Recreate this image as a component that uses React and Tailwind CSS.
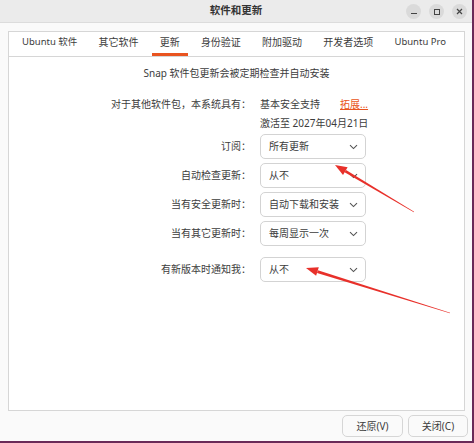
import React from 'react';

const font = { fontFamily: '"Noto Sans", "Noto Sans CJK SC", sans-serif' };

const Chevron = () => (
  <svg width="9" height="6" viewBox="0 0 9 6" className="text-[#555]">
    <path d="M1 1.2 L4.5 4.6 L8 1.2" fill="none" stroke="currentColor" strokeWidth="1.1" />
  </svg>
);

const Select = ({ value, className = '' }) => (
  <div
    className={`flex h-[25px] w-[106px] items-center justify-between rounded-[5px] border border-[#d3d3d3] bg-white pl-[8px] pr-[7px] ${className}`}
  >
    <span>{value}</span>
    <Chevron />
  </div>
);

const Row = ({ label, value, className = '' }) => (
  <div className={`flex items-center ${className}`}>
    <div className="w-[246px] pr-[4px] text-right">{label}</div>
    <div className="pl-[5px]">
      <Select value={value} />
    </div>
  </div>
);

// tapered arrow from tail to tip
const Arrow = ({ tail, tip }) => {
  const dx = tip[0] - tail[0];
  const dy = tip[1] - tail[1];
  const len = Math.hypot(dx, dy);
  const u = [dx / len, dy / len];
  const n = [-u[1], u[0]];
  const hl = 12;
  const hw = 4.5;
  const base = [tip[0] - hl * u[0], tip[1] - hl * u[1]];
  const p = (pt, k) => `${pt[0] + n[0] * k},${pt[1] + n[1] * k}`;
  const shaft = [p(tail, 0.3), p(base, 1.4), p(base, -1.4), p(tail, -0.3)].join(' ');
  const head = [`${tip[0]},${tip[1]}`, p(base, hw), p(base, -hw)].join(' ');
  return (
    <g fill="#e8302a">
      <polygon points={shaft} />
      <polygon points={head} />
    </g>
  );
};

const tabs = ['Ubuntu 软件', '其它软件', '更新', '身份验证', '附加驱动', '开发者选项', 'Ubuntu Pro'];

export default function App() {
  return (
    <div className="relative flex h-[443px] w-[474px] flex-col bg-[#6a2a58] text-[10px] text-[#3c3c3c]" style={font}>
      <div className="flex h-[441px] w-[472px] flex-col bg-[#fafafa]">
        {/* title bar */}
        <div className="relative flex h-[23px] shrink-0 items-center justify-center border-b border-[#dcdcdc] bg-[#ebebeb]">
          <span className="text-[10.5px] font-bold text-[#333]">软件和更新</span>
          <div className="absolute right-[5px] top-[4px] flex gap-[8px]">
            <div className="flex h-[15px] w-[15px] items-center justify-center rounded-full bg-[#dadada]">
              <div className="mt-[4px] h-[1px] w-[6px] bg-[#444]" />
            </div>
            <div className="flex h-[15px] w-[15px] items-center justify-center rounded-full bg-[#dadada]">
              <div className="h-[6px] w-[6px] border border-[#444]" />
            </div>
            <div className="flex h-[15px] w-[15px] items-center justify-center rounded-full bg-[#dadada]">
              <svg width="7" height="7" viewBox="0 0 7 7">
                <path d="M1 1 L6 6 M6 1 L1 6" stroke="#444" strokeWidth="1.2" />
              </svg>
            </div>
          </div>
        </div>

        {/* notebook */}
        <div className="ml-[8px] mt-[8px] flex h-[380px] w-[457px] flex-col border border-[#d6d6d6] bg-white">
          <div className="flex h-[25px] shrink-0 items-stretch justify-between border-b border-[#d6d6d6] pl-[5px] pr-[10px]">
            {tabs.map((t) => (
              <div
                key={t}
                className={`flex items-center border-b-[3px] px-[8px] ${
                  t === '更新' ? 'border-[#e95420] text-[#3c3c3c]' : 'border-transparent'
                } ${t.startsWith('Ubuntu') ? 'text-[9.5px]' : ''}`}
              >
                {t}
              </div>
            ))}
          </div>

          <div className="flex flex-col">
            <div className="mt-[9px] text-center leading-[14px]">Snap 软件包更新会被定期检查并自动安装</div>

            <div className="mt-[17px] flex items-center leading-[14px]">
              <div className="w-[246px] pr-[4px] text-right">对于其他软件包，本系统具有：</div>
              <div className="pl-[5px]">基本安全支持</div>
              <a className="ml-[20px] text-[#e95420] underline">拓展...</a>
            </div>
            <div className="mt-[5px] flex leading-[14px]">
              <div className="w-[246px]" />
              <div className="pl-[5px]">激活至 2027年04月21日</div>
            </div>

            <Row className="mt-[4px]" label="订阅：" value="所有更新" />
            <Row className="mt-[4px]" label="自动检查更新：" value="从不" />
            <Row className="mt-[4px]" label="当有安全更新时：" value="自动下载和安装" />
            <Row className="mt-[4px]" label="当有其它更新时：" value="每周显示一次" />
            <Row className="mt-[11px]" label="有新版本时通知我：" value="从不" />
          </div>
        </div>

        {/* footer */}
        <div className="mr-[4px] mt-[4px] flex justify-end gap-[5px]">
          <button className="h-[22px] w-[61px] rounded-[5px] border border-[#d6d6d6] bg-[#fafafa] text-[10px] text-[#3c3c3c]">
            还原(V)
          </button>
          <button className="h-[22px] w-[60px] rounded-[5px] border border-[#d6d6d6] bg-[#fafafa] text-[10px] text-[#3c3c3c]">
            关闭(C)
          </button>
        </div>
      </div>

      <svg className="pointer-events-none absolute left-0 top-0" width="474" height="443">
        <Arrow tail={[414, 212]} tip={[335, 165]} />
        <Arrow tail={[450, 313]} tip={[306, 268]} />
      </svg>
    </div>
  );
}
